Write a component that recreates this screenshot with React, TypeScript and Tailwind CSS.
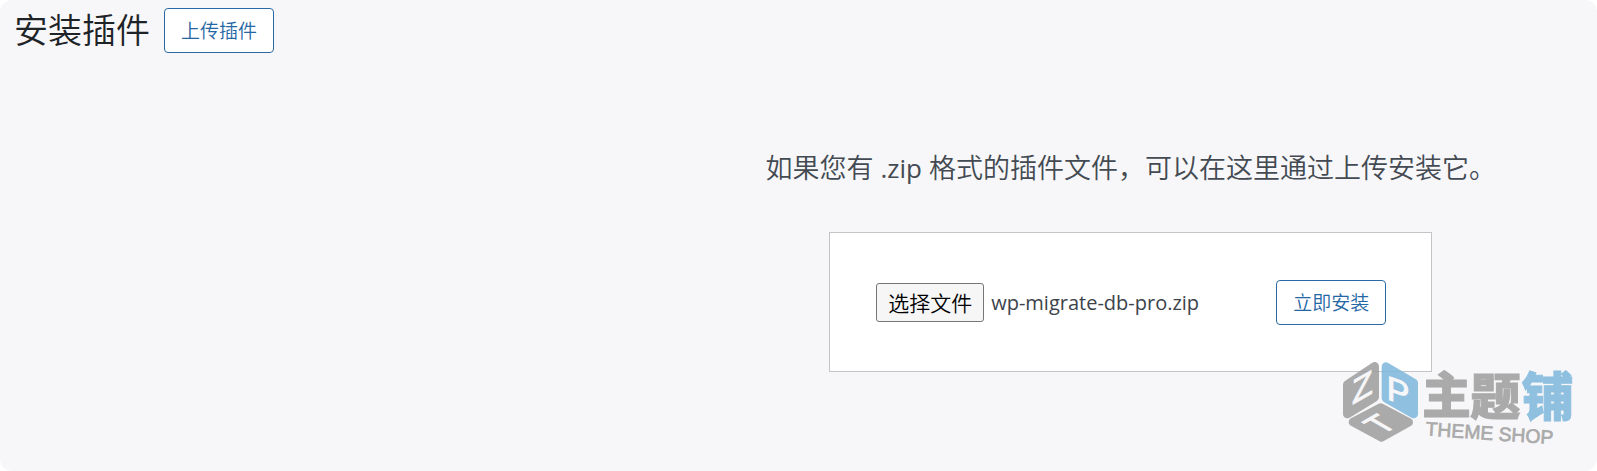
import React, { useRef, useState } from 'react';

const uiFont = "font-['Open_Sans','Noto_Sans_CJK_SC',sans-serif]";

const outlineButton =
    "h-[45px] rounded-[4px] border border-[#2a6aa3] bg-white px-4 text-[19px] leading-6 text-[#2467a4] whitespace-nowrap hover:bg-[#f0f0f1] cursor-pointer";

const ThemeShopMark = () => (
    <svg
        className="pointer-events-none absolute right-0 bottom-0 h-[121px] w-[272px] opacity-85"
        viewBox="0 0 816 363"
        role="img"
        aria-label="主题铺 THEME SHOP"
    >
        {/* Cube faces */}
        <g strokeLinejoin="round" strokeWidth="26">
            <path d="M67 104 L149 49 V142 L67 192 Z" fill="#9d9d9d" stroke="#9d9d9d" />
            <path d="M183 50 L266 99 V192 L183 145 Z" fill="#7db7dc" stroke="#7db7dc" />
            <path d="M84 216 L167 173 L251 217 L170 262 Z" fill="#9d9d9d" stroke="#9d9d9d" />
        </g>
        <g fill="#f7f7f9" stroke="#f7f7f9" strokeWidth="3" fontFamily="'Liberation Sans', sans-serif" fontSize="92">
            <text transform="translate(81 164) skewY(-30)" fontSize="102">Z</text>
            <text transform="translate(185 147) skewY(20)" fontSize="102">P</text>
            <text transform="translate(196 240) rotate(-30) skewX(30)" textAnchor="middle">T</text>
        </g>
        <g fontFamily="'Noto Sans CJK SC', sans-serif" fontWeight="900" strokeWidth="3">
            <text x="292" y="189" fontSize="146" fill="#9d9d9d" stroke="#9d9d9d">主</text>
            <text x="436" y="195" fontSize="151" fill="#9d9d9d" stroke="#9d9d9d">题</text>
            <text x="590" y="199" fontSize="156" fill="#7db7dc" stroke="#7db7dc">铺</text>
        </g>
        <text
            transform="translate(301 256) rotate(4)"
            fontFamily="'Liberation Sans', sans-serif"
            fontSize="58"
            fill="#9d9d9d"
            stroke="#9d9d9d"
            strokeWidth="2"
        >
            THEME SHOP
        </text>
    </svg>
);

export default function App() {
    const [fileName, setFileName] = useState('wp-migrate-db-pro.zip');
    const fileInput = useRef<HTMLInputElement>(null);

    const onFileChange = (e: React.ChangeEvent<HTMLInputElement>) => {
        const file = e.target.files?.[0];
        if (file) setFileName(file.name);
    };

    return (
        <div className="min-h-screen bg-white">
            <main className={`relative min-h-screen rounded-xl bg-[#f7f7f9] font-[350] ${uiFont}`}>
                <header className="flex items-center gap-3.5 pt-2 pl-3.5">
                    <h1 className="text-[34px] leading-[45px] font-[350] text-[#1d2327]">安装插件</h1>
                    <button type="button" className={outlineButton}>上传插件</button>
                </header>

                <section className="flex flex-col items-center pt-[97px] pl-[41.6%]">
                    <p className="text-[27px] leading-9 whitespace-nowrap text-[#434a52]">
                        如果您有 <span className="text-[26px] font-normal">.zip</span> 格式的插件文件，可以在这里通过上传安装它。
                    </p>

                    <form
                        className="mt-[46px] flex items-center border border-[#c3c4c7] bg-white pt-[47px] pr-[45px] pb-[46px] pl-[46px]"
                        onSubmit={(e) => e.preventDefault()}
                    >
                        <input
                            ref={fileInput}
                            type="file"
                            accept=".zip"
                            aria-label="插件zip文件"
                            className="hidden"
                            onChange={onFileChange}
                        />
                        <div className="flex w-[400px] items-center gap-[7px]">
                            <button
                                type="button"
                                className="h-[39px] shrink-0 cursor-pointer rounded-[3px] border border-[#767676] bg-[#f6f6f6] px-[11px] text-[21px] leading-7 text-black"
                                onClick={() => fileInput.current?.click()}
                            >
                                选择文件
                            </button>
                            <span className="truncate text-[20px] leading-7 font-normal text-[#3c434a]">{fileName}</span>
                        </div>
                        <button type="submit" className={outlineButton}>立即安装</button>
                    </form>
                </section>

                <ThemeShopMark />
            </main>
        </div>
    );
}
